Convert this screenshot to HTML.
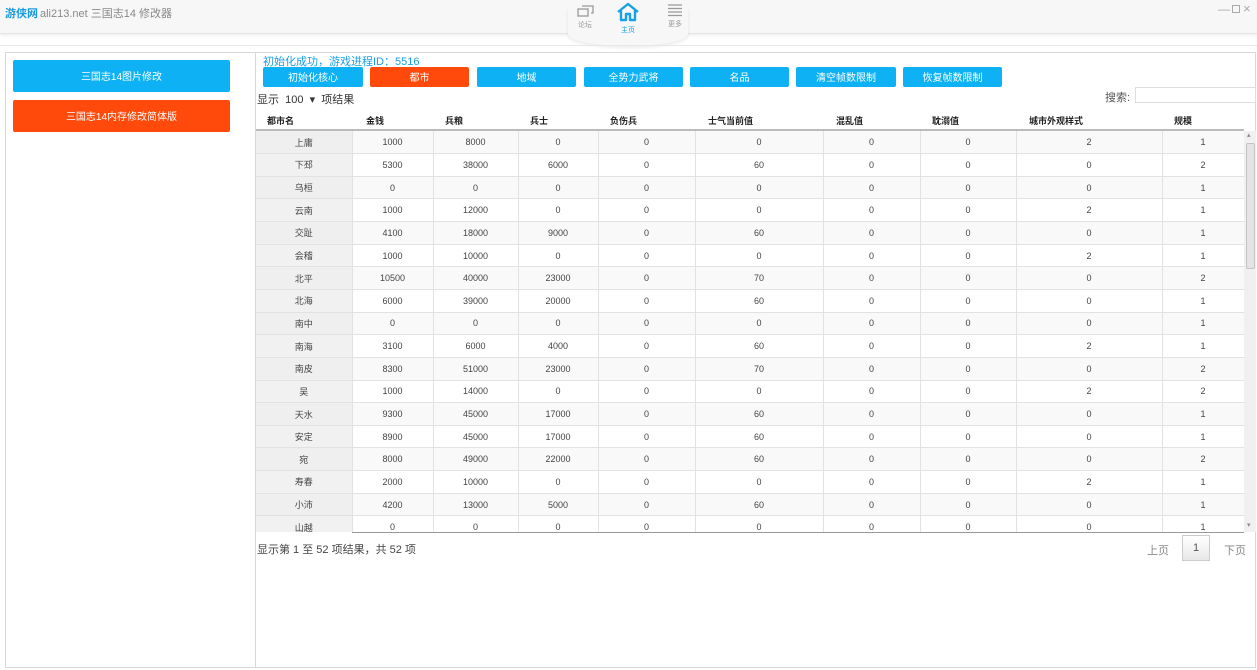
<!DOCTYPE html>
<html><head><meta charset="utf-8"><style>
*{margin:0;padding:0;box-sizing:border-box}
body{width:1257px;height:670px;background:#fff;font-family:"Liberation Sans","Noto Sans CJK SC",sans-serif;position:relative;overflow:hidden;color:#333}
.abs{position:absolute}
#hdr{left:0;top:0;width:1257px;height:34px;background:#f7f7f7;border-bottom:1px solid #e4e4e4;box-shadow:0 2px 3px rgba(0,0,0,.06)}
.btn{position:absolute;height:20px;color:#fff;font-size:10px;display:flex;align-items:center;justify-content:center;border-radius:2px;line-height:1}
.btn span{position:relative;top:2px}
.b{background:#0db1f4}.o{background:#ff4a0c}
table{border-collapse:collapse;font-size:9px;table-layout:fixed}
td{height:22.65px;border-right:1px solid #e2e2e2;border-bottom:1px solid #e2e2e2;text-align:center;color:#444}
td:first-child{background:#f1f1f1}
tr:nth-child(odd) td{background:#f9f9f9}
tr:nth-child(odd) td:first-child{background:#efefef}
.th{position:absolute;top:114px;font-size:9px;font-weight:bold;color:#222}
</style></head><body>
<div id="hdr" class="abs"></div>
<div class="abs" style="left:5px;top:5px;font-size:11px;color:#1a9be0;font-weight:bold">游侠网</div>
<div class="abs" style="left:40px;top:5px;font-size:11px;color:#888">ali213.net 三国志14 修改器</div>
<div class="abs" style="left:1218px;top:2px;font-size:12px;color:#aaa">—</div>
<div class="abs" style="left:1232px;top:5px;width:8px;height:8px;border:1px solid #aaa"></div>
<div class="abs" style="left:1243px;top:1px;font-size:13px;color:#aaa">×</div>
<div class="abs" style="left:568px;top:8px;width:120px;height:38px;border-radius:0 0 60px 60px/0 0 12px 12px;background:#f7f7f7;box-shadow:0 2px 3px rgba(0,0,0,.08)"></div>
<svg class="abs" style="left:577px;top:5px" width="18" height="14" viewBox="0 0 18 14"><rect x="1" y="4" width="10" height="7" fill="none" stroke="#999" stroke-width="1.3"/><path d="M5 1h11v7h-2" fill="none" stroke="#999" stroke-width="1.3"/></svg>
<div class="abs" style="left:578px;top:20px;font-size:7px;color:#999">论坛</div>
<svg class="abs" style="left:616px;top:2px" width="24" height="20" viewBox="0 0 24 20"><path d="M2 10L12 2l10 8M5 8v10h5v-6h4v6h5V8" fill="none" stroke="#1aa0e6" stroke-width="2.4" stroke-linejoin="round"/></svg>
<div class="abs" style="left:621px;top:25px;font-size:7px;color:#1aa0e6">主页</div>
<svg class="abs" style="left:667px;top:4px" width="16" height="15" viewBox="0 0 16 15"><path d="M1 1h14M1 4.5h14M1 8h14M1 11.5h14" stroke="#999" stroke-width="1.2"/></svg>
<div class="abs" style="left:668px;top:19px;font-size:7px;color:#999">更多</div>
<div class="abs" style="left:0;top:45px;width:1257px;height:1px;background:#e8e8e8"></div>
<div class="abs" style="left:5px;top:52px;width:1251px;height:616px;border:1px solid #d8d8d8"></div>
<div class="abs" style="left:255px;top:52px;width:1px;height:616px;background:#d8d8d8"></div>
<div class="btn b" style="left:13px;top:60px;width:217px;height:32px"><span>三国志14图片修改</span></div>
<div class="btn o" style="left:13px;top:100px;width:217px;height:32px"><span>三国志14内存修改简体版</span></div>
<div class="abs" style="left:263px;top:53px;font-size:11px;color:#1aa0e6">初始化成功，游戏进程ID：5516</div>
<div class="btn b" style="left:263px;top:67px;width:100px"><span>初始化核心</span></div>
<div class="btn o" style="left:370px;top:67px;width:99px"><span>都市</span></div>
<div class="btn b" style="left:477px;top:67px;width:99px"><span>地域</span></div>
<div class="btn b" style="left:584px;top:67px;width:99px"><span>全势力武将</span></div>
<div class="btn b" style="left:690px;top:67px;width:99px"><span>名品</span></div>
<div class="btn b" style="left:796px;top:67px;width:100px"><span>清空帧数限制</span></div>
<div class="btn b" style="left:903px;top:67px;width:99px"><span>恢复帧数限制</span></div>
<div class="abs" style="left:257px;top:91px;font-size:11px;color:#333">显示 &nbsp;100 &nbsp;▾ &nbsp;项结果</div>
<div class="abs" style="left:1105px;top:89px;font-size:11px;color:#555">搜索:</div>
<div class="abs" style="left:1135px;top:87px;width:121px;height:16px;border:1px solid #ddd"></div>
<div class="th" style="left:267px">都市名</div><div class="th" style="left:366px">金钱</div><div class="th" style="left:445px">兵粮</div><div class="th" style="left:530px">兵士</div><div class="th" style="left:610px">负伤兵</div><div class="th" style="left:708px">士气当前值</div><div class="th" style="left:836px">混乱值</div><div class="th" style="left:932px">耽溺值</div><div class="th" style="left:1029px">城市外观样式</div><div class="th" style="left:1174px">规模</div>
<div class="abs" style="left:256px;top:129px;width:988px;height:2px;background:#bbb"></div>
<div class="abs" style="left:256px;top:131px;width:988px;height:401px;overflow:hidden">
<table style="width:988px"><colgroup><col style="width:96px"><col style="width:81px"><col style="width:85px"><col style="width:80px"><col style="width:97px"><col style="width:128px"><col style="width:97px"><col style="width:96px"><col style="width:146px"><col style="width:82px"></colgroup>
<tr><td>上庸</td><td>1000</td><td>8000</td><td>0</td><td>0</td><td>0</td><td>0</td><td>0</td><td>2</td><td>1</td></tr>
<tr><td>下邳</td><td>5300</td><td>38000</td><td>6000</td><td>0</td><td>60</td><td>0</td><td>0</td><td>0</td><td>2</td></tr>
<tr><td>乌桓</td><td>0</td><td>0</td><td>0</td><td>0</td><td>0</td><td>0</td><td>0</td><td>0</td><td>1</td></tr>
<tr><td>云南</td><td>1000</td><td>12000</td><td>0</td><td>0</td><td>0</td><td>0</td><td>0</td><td>2</td><td>1</td></tr>
<tr><td>交趾</td><td>4100</td><td>18000</td><td>9000</td><td>0</td><td>60</td><td>0</td><td>0</td><td>0</td><td>1</td></tr>
<tr><td>会稽</td><td>1000</td><td>10000</td><td>0</td><td>0</td><td>0</td><td>0</td><td>0</td><td>2</td><td>1</td></tr>
<tr><td>北平</td><td>10500</td><td>40000</td><td>23000</td><td>0</td><td>70</td><td>0</td><td>0</td><td>0</td><td>2</td></tr>
<tr><td>北海</td><td>6000</td><td>39000</td><td>20000</td><td>0</td><td>60</td><td>0</td><td>0</td><td>0</td><td>1</td></tr>
<tr><td>南中</td><td>0</td><td>0</td><td>0</td><td>0</td><td>0</td><td>0</td><td>0</td><td>0</td><td>1</td></tr>
<tr><td>南海</td><td>3100</td><td>6000</td><td>4000</td><td>0</td><td>60</td><td>0</td><td>0</td><td>2</td><td>1</td></tr>
<tr><td>南皮</td><td>8300</td><td>51000</td><td>23000</td><td>0</td><td>70</td><td>0</td><td>0</td><td>0</td><td>2</td></tr>
<tr><td>吴</td><td>1000</td><td>14000</td><td>0</td><td>0</td><td>0</td><td>0</td><td>0</td><td>2</td><td>2</td></tr>
<tr><td>天水</td><td>9300</td><td>45000</td><td>17000</td><td>0</td><td>60</td><td>0</td><td>0</td><td>0</td><td>1</td></tr>
<tr><td>安定</td><td>8900</td><td>45000</td><td>17000</td><td>0</td><td>60</td><td>0</td><td>0</td><td>0</td><td>1</td></tr>
<tr><td>宛</td><td>8000</td><td>49000</td><td>22000</td><td>0</td><td>60</td><td>0</td><td>0</td><td>0</td><td>2</td></tr>
<tr><td>寿春</td><td>2000</td><td>10000</td><td>0</td><td>0</td><td>0</td><td>0</td><td>0</td><td>2</td><td>1</td></tr>
<tr><td>小沛</td><td>4200</td><td>13000</td><td>5000</td><td>0</td><td>60</td><td>0</td><td>0</td><td>0</td><td>1</td></tr>
<tr><td>山越</td><td>0</td><td>0</td><td>0</td><td>0</td><td>0</td><td>0</td><td>0</td><td>0</td><td>1</td></tr>
</table></div>
<div class="abs" style="left:352px;top:532px;width:892px;height:1px;background:#999"></div>
<div class="abs" style="left:1244px;top:131px;width:12px;height:401px;background:#f0f0f0"></div>
<div class="abs" style="left:1246px;top:143px;width:9px;height:126px;background:#e4e4e4;border:1px solid #c4c4c4;border-radius:2px"></div>
<div class="abs" style="left:1247px;top:131px;font-size:7px;color:#888">▴</div>
<div class="abs" style="left:1247px;top:521px;font-size:7px;color:#888">▾</div>
<div class="abs" style="left:257px;top:541px;font-size:11px;color:#444">显示第 1 至 52 项结果，共 52 项</div>
<div class="abs" style="left:1147px;top:542px;font-size:11px;color:#888">上页</div>
<div class="abs" style="left:1182px;top:535px;width:28px;height:26px;border:1px solid #ccc;background:linear-gradient(#fff,#e8e8e8);font-size:11px;color:#555;text-align:center;line-height:24px">1</div>
<div class="abs" style="left:1224px;top:542px;font-size:11px;color:#888">下页</div>
</body></html>
